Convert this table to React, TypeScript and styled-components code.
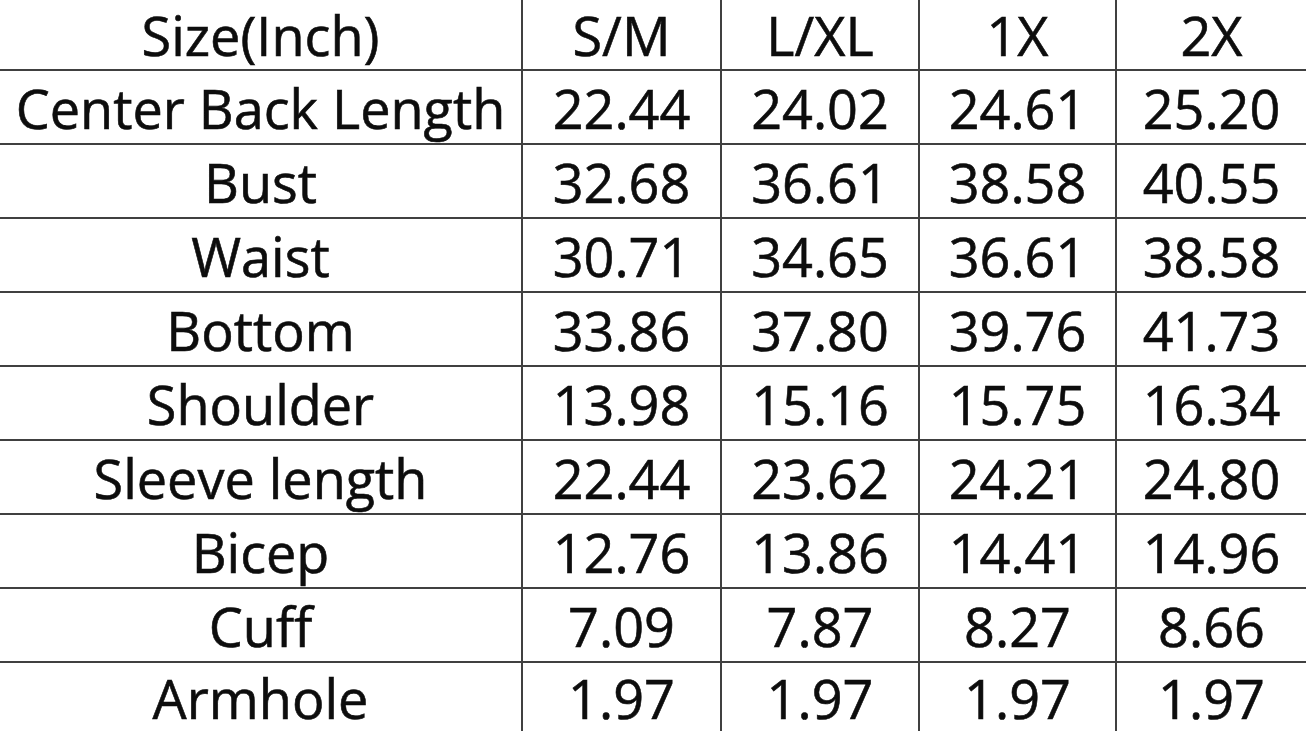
import styled, { createGlobalStyle } from 'styled-components';

const GlobalStyle = createGlobalStyle`
  html, body {
    margin: 0;
    padding: 0;
    background: #ffffff;
    overflow: hidden;
  }
  body {
    font-family: 'Open Sans', 'Noto Sans', sans-serif;
  }
`;

// size chart data
const sizes = ['S/M', 'L/XL', '1X', '2X'];
const rows: [string, string[]][] = [
  ['Center Back Length', ['22.44', '24.02', '24.61', '25.20']],
  ['Bust', ['32.68', '36.61', '38.58', '40.55']],
  ['Waist', ['30.71', '34.65', '36.61', '38.58']],
  ['Bottom', ['33.86', '37.80', '39.76', '41.73']],
  ['Shoulder', ['13.98', '15.16', '15.75', '16.34']],
  ['Sleeve length', ['22.44', '23.62', '24.21', '24.80']],
  ['Bicep', ['12.76', '13.86', '14.41', '14.96']],
  ['Cuff', ['7.09', '7.87', '8.27', '8.66']],
  ['Armhole', ['1.97', '1.97', '1.97', '1.97']],
];

const Chart = styled.div`
  width: 1306px;
  height: 731px;
  display: grid;
  grid-template-columns: 521px 197px 196px 195px 1fr;
  grid-template-rows: 69px repeat(8, 72px) 68px;
  gap: 2px;
  background: #404040;
`;

const Cell = styled.div<{ $head?: boolean }>`
  background: #ffffff;
  display: flex;
  align-items: center;
  justify-content: center;
  font-size: 54px;
  line-height: 1;
  color: #0d0d0d;
  -webkit-text-stroke: 0.6px #0d0d0d;
  white-space: nowrap;
  padding-top: ${(p) => (p.$head ? '0' : '1px')};
`;

const App = () => {
  return (
    <>
      <GlobalStyle />
      <Chart>
        <Cell $head>Size(Inch)</Cell>
        {sizes.map((s) => (
          <Cell $head key={s}>
            {s}
          </Cell>
        ))}
        {rows.map(([label, vals]) => [
          <Cell key={label}>{label}</Cell>,
          ...vals.map((v, i) => <Cell key={label + i}>{v}</Cell>),
        ])}
      </Chart>
    </>
  );
};

export default App;
